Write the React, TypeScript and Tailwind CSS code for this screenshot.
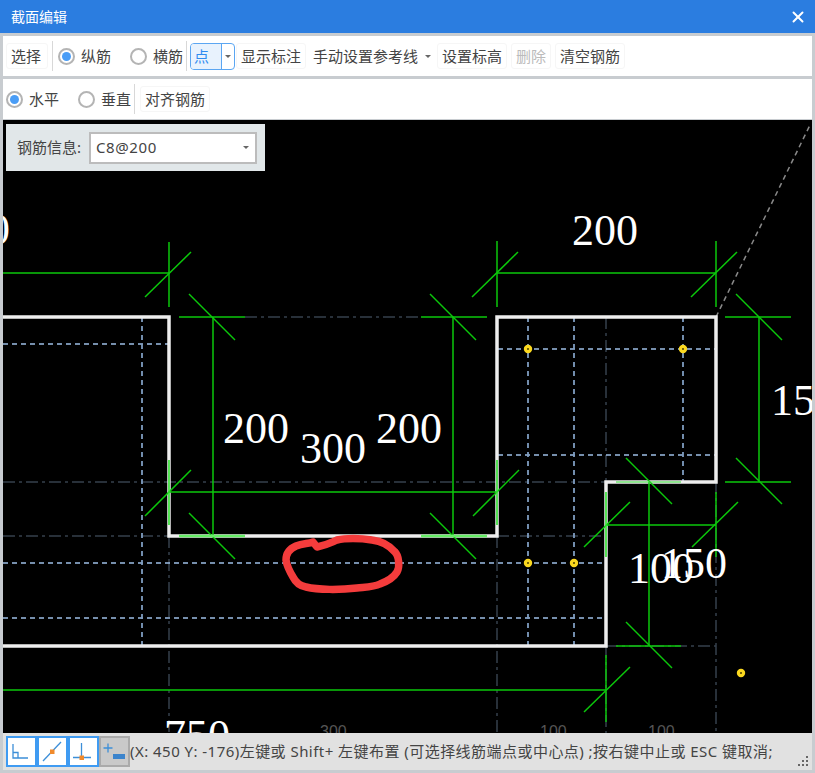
import type { ReactNode } from "react";
import { X } from "lucide-react";

const FONT = '"Noto Sans", "Noto Sans CJK SC", sans-serif';

// [x1, y1, x2, y2] in page pixels, the svg viewBox starts at the canvas corner
type Seg = [number, number, number, number];

const GREEN: Seg[] = [
  // top left
  [3, 273, 169, 273], [169, 242, 169, 307], [145, 297, 191, 252],
  // top right
  [497, 273, 716, 273], [497, 241, 497, 307], [716, 241, 716, 307], [472, 297, 518, 252], [691, 297, 737, 252],
  // 200 left
  [213, 317, 213, 536], [179, 317, 245, 317], [189, 294, 235, 340], [189, 513, 235, 559],
  // 200 right
  [453, 317, 453, 536], [421, 317, 487, 317], [430, 294, 476, 340], [430, 513, 476, 559],
  // 300
  [169, 492, 497, 492], [145, 516, 191, 470], [473, 516, 519, 470],
  // 15x
  [759, 317, 759, 482], [725, 317, 791, 317], [725, 482, 791, 482], [736, 294, 782, 340], [736, 458, 782, 504],
  // 100
  [649, 482, 649, 646], [616, 646, 681, 646], [626, 458, 672, 504], [626, 622, 672, 668],
  // 150
  [606, 525, 716, 525], [716, 492, 716, 557], [584, 547, 630, 502], [692, 547, 738, 502],
  // 750
  [3, 690, 606, 690], [606, 655, 606, 722], [584, 712, 630, 667],
];

const BLUE_H: Seg[] = [
  [3, 344, 169, 344], [498, 349, 715, 349], [498, 455, 715, 455], [3, 563, 606, 563], [3, 618, 606, 618],
];

const BLUE_V: Seg[] = [
  [142, 317, 142, 646], [528, 317, 528, 646], [574, 317, 574, 646], [683, 317, 683, 482],
];

const DARK_DASH: Seg[] = [
  [245, 317, 421, 317], [3, 482, 606, 482], [3, 536, 169, 536], [497, 536, 606, 536], [606, 646, 716, 646],
  [169, 536, 169, 733], [497, 536, 497, 733], [606, 317, 606, 482], [606, 646, 606, 733], [716, 482, 716, 733],
];

// dimension lines lying on the white outline read lighter
const ON_OUTLINE: Seg[] = [
  [169, 460, 169, 525], [497, 460, 497, 525], [606, 492, 606, 557],
];

const BRIGHT: Seg[] = [
  [179, 536, 245, 536], [421, 536, 487, 536],
];

const DOTS = [[528, 349], [683, 349], [528, 563], [574, 563], [741, 673]];

const LABELS: { t: string; x: number; y: number }[] = [
  { t: "0", x: -12, y: 244 },
  { t: "200", x: 572, y: 245 },
  { t: "200", x: 223, y: 443 },
  { t: "300", x: 300, y: 463 },
  { t: "200", x: 376, y: 443 },
  { t: "15", x: 771, y: 415 },
  { t: "100", x: 628, y: 583 },
  { t: "150", x: 661, y: 578 },
  { t: "750", x: 164, y: 750 },
];

function Lines({ segs, stroke, width, dash }: { segs: Seg[]; stroke: string; width: number; dash?: string }) {
  return (
    <g stroke={stroke} strokeWidth={width} strokeDasharray={dash}>
      {segs.map((s, i) => (
        <line key={i} x1={s[0]} y1={s[1]} x2={s[2]} y2={s[3]} />
      ))}
    </g>
  );
}

function Drawing() {
  return (
    <svg viewBox="3 120 809 613" className="block w-[809px] h-[613px]" fill="none">
      <Lines segs={DARK_DASH} stroke="#36404c" width={1.5} dash="12 4 3 4" />
      <Lines segs={BLUE_H} stroke="#9dbfe6" width={1.3} dash="5 4" />
      <Lines segs={BLUE_V} stroke="#7f9dc0" width={1.8} dash="5 4" />
      <line x1="716" y1="317" x2="810" y2="125" stroke="#8a8a8a" strokeWidth="1.5" strokeDasharray="5 4" />
      <path d="M3 317H169V536H497V317H716V482H606V646H3" stroke="#eeeeee" strokeWidth="3.5" />
      <Lines segs={GREEN} stroke="#0bc80b" width={1.5} />
      <Lines segs={ON_OUTLINE} stroke="#2fe02f" width={1.6} />
      <Lines segs={BRIGHT} stroke="#66ee66" width={2.5} />
      <line x1="616" y1="482" x2="681" y2="482" stroke="#35e035" strokeWidth="1.2" />
      {DOTS.map(([x, y]) => (
        <circle key={x + "-" + y} cx={x} cy={y} r="2.6" fill="#4a3d00" stroke="#fbd81f" strokeWidth="3.2" />
      ))}
      <path
        d="M313 542C308 544 303 543 296 546C289 549 286 554 286 560C287 567 290 572 293 577C296 583 300 586 306 587C318 590 340 590 357 588C367 587 374 587 380 584C388 581 394 577 397 572C400 567 399 556 395 552C389 545 381 541 372 540C360 538 345 538 337 540C332 542 327 545 317 547Z"
        stroke="#f43c3c"
        strokeWidth="7.5"
        strokeLinejoin="round"
      />
      <g fill="#ffffff" fontSize="44" fontFamily='"Liberation Serif", serif'>
        {LABELS.map((l) => (
          <text key={l.t + l.x} x={l.x} y={l.y}>
            {l.t}
          </text>
        ))}
      </g>
      <g fill="#555555" fontSize="16" fontFamily='"Liberation Sans", sans-serif'>
        <text x="320" y="737">300</text>
        <text x="540" y="737">100</text>
        <text x="648" y="737">100</text>
      </g>
    </svg>
  );
}

function Radio({ checked, label, className }: { checked?: boolean; label: string; className: string }) {
  return (
    <div className={"flex items-center gap-[6px] " + className}>
      <span className="w-[17px] h-[17px] rounded-full border-2 border-[#b4b4b4] bg-white flex items-center justify-center">
        {checked && <span className="w-[9px] h-[9px] rounded-full bg-[#4a9df6]" />}
      </span>
      <span>{label}</span>
    </div>
  );
}

function Btn({ children, className }: { children: ReactNode; className: string }) {
  return (
    <div className={"h-[26px] px-[4px] flex items-center rounded-[3px] border border-[#f6f6f6] " + className}>
      {children}
    </div>
  );
}

function Sep({ className }: { className: string }) {
  return <div className={"w-px h-[30px] bg-[#d8d8d8] " + className} />;
}

function Caret({ className }: { className: string }) {
  return (
    <span
      className={
        "w-0 h-0 border-l-[3.5px] border-r-[3.5px] border-t-[3.5px] border-l-transparent border-r-transparent border-t-[#666] " +
        className
      }
    />
  );
}

function SnapBtn({ children, active }: { children: ReactNode; active?: boolean }) {
  return (
    <div
      className={
        active
          ? "w-[31px] h-[31px] border-2 border-[#aaaaaa] bg-[#c9c9c9]"
          : "w-[31px] h-[31px] border-2 border-[#3f9bf2] bg-white"
      }
    >
      <svg viewBox="0 0 27 27" className="block w-[27px] h-[27px]" fill="none">
        {children}
      </svg>
    </div>
  );
}

export default function App() {
  return (
    <div
      className="w-[815px] h-[773px] flex flex-col overflow-hidden bg-[#c8ccd0] text-[15px] text-[#444444]"
      style={{ fontFamily: FONT }}
    >
      {/* title */}
      <div className="h-[33px] shrink-0 bg-[#2b7de0] text-white text-[14px] flex items-center justify-between pl-[11px] pr-[8px]">
        <span>截面编辑</span>
        <X size={18} strokeWidth={2.6} />
      </div>

      <div className="flex-1 flex flex-col px-[3px] pt-[3px] pb-[3px] min-h-0">
        {/* row 1 */}
        <div className="h-[40px] shrink-0 bg-white flex items-center pl-[3px]">
          <Btn className="w-[42px]">选择</Btn>
          <Sep className="ml-[4px]" />
          <Radio checked label="纵筋" className="ml-[5px]" />
          <Radio label="横筋" className="ml-[19px]" />
          <Sep className="ml-[3px]" />
          <div className="ml-[3px] h-[27px] w-[45px] flex rounded-[4px] border border-[#5ba6f2] overflow-hidden">
            <div className="w-[30px] bg-[#e8f2fd] text-[#2f8cf0] pl-[3px] leading-[25px]">点</div>
            <div className="flex-1 border-l border-[#5ba6f2] flex items-center justify-center">
              <Caret className="" />
            </div>
          </div>
          <Btn className="ml-px w-[70px]">显示标注</Btn>
          <div className="ml-[7px]">手动设置参考线</div>
          <Caret className="ml-[7px]" />
          <Btn className="ml-[6px] w-[70px]">设置标高</Btn>
          <Btn className="ml-[4px] text-[#bbbbbb]">删除</Btn>
          <Btn className="ml-[4px]">清空钢筋</Btn>
        </div>

        {/* row 2 */}
        <div className="h-[40px] mt-[3px] shrink-0 bg-white flex items-center pl-[3px]">
          <Radio checked label="水平" />
          <Radio label="垂直" className="ml-[19px]" />
          <Sep className="ml-[3px]" />
          <Btn className="ml-[5px]">对齐钢筋</Btn>
        </div>

        {/* canvas */}
        <div className="relative mt-px h-[613px] shrink-0 bg-black overflow-hidden">
          <Drawing />
          <div className="absolute left-[3px] top-[4px] w-[259px] h-[47px] bg-[#e1e7e9] flex items-center pl-[11px]">
            <span className="w-[72px] whitespace-nowrap">钢筋信息:</span>
            <div className="w-[168px] h-[32px] bg-white border-2 border-[#bcbcbc] flex items-center justify-between pl-[5px] pr-[6px]">
              <span className="tracking-[0.6px]">C8@200</span>
              <Caret className="" />
            </div>
          </div>
        </div>

        {/* status */}
        <div className="relative flex-1 bg-[#e1e1e1] flex items-center pl-[3px] text-[#444444] whitespace-nowrap">
          <SnapBtn>
            <path d="M5 6V20H20M5 14.5H10V20" stroke="#3d8fd8" strokeWidth="1.3" />
          </SnapBtn>
          <SnapBtn>
            <path d="M4 23L22 4" stroke="#3d8fd8" strokeWidth="1.3" />
            <rect x="11" y="11.5" width="4.5" height="4.5" fill="#f08a2c" />
          </SnapBtn>
          <SnapBtn>
            <path d="M11.5 5V20M3 19.5H21" stroke="#3d8fd8" strokeWidth="1.3" />
            <rect x="9.5" y="17.5" width="4.5" height="4.5" fill="#f08a2c" />
          </SnapBtn>
          <SnapBtn active>
            <path d="M7 5.5V14.5M2.5 10H11.5" stroke="#3d8fd8" strokeWidth="1.3" />
            <rect x="12" y="16" width="12" height="5" fill="#3c84cc" />
          </SnapBtn>
          <span className="tracking-[0.46px]">(X: 450 Y: -176)左键或 Shift+ 左键布置 (可选择线筋端点或中心点) ;按右键中止或 ESC 键取消;</span>
          <svg viewBox="0 0 10 10" className="absolute right-[4px] bottom-[4px] w-[10px] h-[10px]" fill="#666666">
            <rect x="8" y="0" width="2" height="2" />
            <rect x="4" y="4" width="2" height="2" />
            <rect x="8" y="4" width="2" height="2" />
            <rect x="0" y="8" width="2" height="2" />
            <rect x="4" y="8" width="2" height="2" />
            <rect x="8" y="8" width="2" height="2" />
          </svg>
        </div>
      </div>
    </div>
  );
}
